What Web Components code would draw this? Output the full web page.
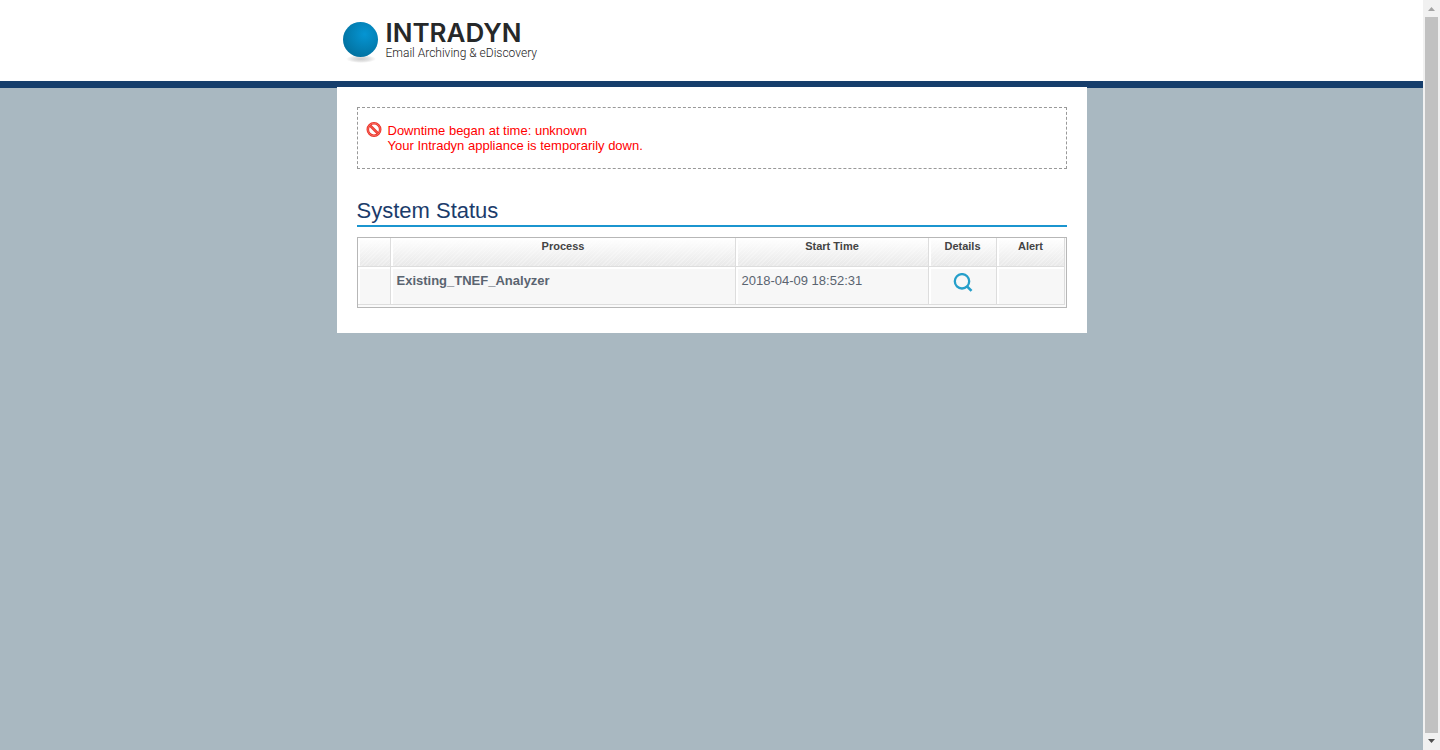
<!DOCTYPE html>
<html lang="en">
<head>
<meta charset="utf-8">
<title>Intradyn - System Status</title>
<style>
html, body { margin: 0; height: 100%; }
body { font: 13px/15px "Liberation Sans", Arial, sans-serif; color: #5a6470; background: #a9b8c1; overflow: hidden; }
</style>
</head>
<body>
<app-shell>
  <site-header slot="header"><brand-logo></brand-logo></site-header>
  <content-card>
    <status-notice>
      <div>Downtime began at time: unknown</div>
      <div>Your Intradyn appliance is temporarily down.</div>
    </status-notice>
    <section-title>System Status</section-title>
    <process-table></process-table>
  </content-card>
  <scroll-rail slot="rail"></scroll-rail>
</app-shell>
<script>
function define(name, markup) {
  const template = document.createElement('template');
  template.innerHTML = markup;
  customElements.define(name, class extends HTMLElement {
    constructor() {
      super();
      this.attachShadow({ mode: 'open' }).append(template.content.cloneNode(true));
    }
  });
}

define('app-shell', `
<style>
:host { display: grid; grid-template-columns: minmax(0, 1fr) 17px; min-height: 100vh; }
</style>
<div><slot name="header"></slot><main><slot></slot></main></div>
<slot name="rail"></slot>`);

define('site-header', `
<style>
:host { display: block; background: #fff; border-bottom: 7px solid #163e6c; }
header { box-sizing: border-box; max-width: 750px; height: 81px; margin: 0 auto; padding: 20px 6px 0; }
</style>
<header><slot></slot></header>`);

define('brand-logo', `
<style>
:host { display: block; }
a { display: inline-flex; gap: 7px; color: #262829; text-decoration: none; }
svg { display: block; flex: none; }
.name { display: block; font: 600 26px/26px Inter, sans-serif; }
.tag { display: block; font: 300 12px/14px Roboto, sans-serif; color: #222; white-space: nowrap; }
</style>
<a href="#">
  <svg width="36" height="44" viewBox="0 0 36 44" aria-hidden="true">
    <defs>
      <radialGradient id="ball" cx=".62" cy=".35" r=".7"><stop offset="0" stop-color="#0595d3"/><stop offset="1" stop-color="#02719f"/></radialGradient>
      <radialGradient id="shade"><stop offset="0" stop-color="#ccc"/><stop offset=".6" stop-color="#e4e4e4"/><stop offset="1" stop-color="#fff"/></radialGradient>
    </defs>
    <ellipse cx="18" cy="39" rx="15" ry="4" fill="url(#shade)"/>
    <circle cx="17.500" cy="19.500" r="17.500" fill="url(#ball)"/>
  </svg>
  <span><span class="name">INTRADYN</span><span class="tag">Email Archiving &amp; eDiscovery</span></span>
</a>`);

define('content-card', `
<style>
:host { display: block; box-sizing: border-box; position: relative; max-width: 750px; margin: -1px auto 0; padding: 20px 20px 25px; background: #fff; }
</style>
<slot></slot>`);

define('status-notice', `
<style>
:host { display: flex; gap: 5px; border: 1px dashed #999; padding: 13px 8px 15px; color: #f00; }
svg { flex: none; }
.text { padding-top: 2px; }
</style>
<svg width="17" height="17" viewBox="0 0 17 17" aria-hidden="true">
  <g fill="none" stroke="#ea3228" stroke-width="2.600"><circle cx="8" cy="8.500" r="6.200"/><path d="M4 4.500l8 8"/></g>
  <g fill="none" stroke="#ff8b80" stroke-width=".6"><circle cx="8" cy="8.500" r="6.200"/><path d="M4 4.500l8 8"/></g>
</svg>
<div class="text" role="alert"><slot></slot></div>`);

define('section-title', `
<style>
:host { display: block; margin: 30px 0 10px; }
h1 { margin: 0; padding-bottom: 2px; font-size: 22px; line-height: 24px; font-weight: 400; color: #1b3c6b; border-bottom: 2px solid #1b95cf; }
</style>
<h1><slot></slot></h1>`);

define('search-icon', `
<style>:host { display: inline-block; vertical-align: top; } svg { display: block; }</style>
<svg width="20" height="20" viewBox="0 0 20 20" aria-hidden="true">
  <g fill="none" stroke="#259fca"><circle cx="9" cy="8.300" r="7.200" stroke-width="2.300"/><path d="M13.500 12.800l5 5" stroke-width="2.600"/></g>
</svg>`);

define('process-table', `
<style>
:host { display: block; border: 1px solid #b7b7b7; padding: 0 1px 2px 0; background: #fafafa; }
table { width: 100%; table-layout: fixed; border-collapse: separate; border-spacing: 0; }
th, td { box-sizing: border-box; vertical-align: top; border: solid #ddd; border-width: 0 1px 1px 0; padding: 6px 5px 0 6px; box-shadow: inset 2px 2px #fff; }
thead th { height: 29px; padding-top: 2px; font-size: 11px; line-height: 13px; color: #444;
  background: repeating-linear-gradient(135deg, #ffffff44 0 1px, #ffffff00 1px 3px), linear-gradient(#fff, #e9e9e9); }
tbody th, tbody td { height: 38px; background: #f7f7f7; text-align: left; }
tbody .center { text-align: center; }
.mark { width: 33px; } .time { width: 193px; } .small { width: 68px; }
button { display: inline-block; padding: 0; border: 0; background: none; vertical-align: top; cursor: pointer; }
</style>
<table>
  <colgroup><col class="mark"><col><col class="time"><col class="small"><col class="small"></colgroup>
  <thead><tr><th></th><th scope="col">Process</th><th scope="col">Start Time</th><th scope="col">Details</th><th scope="col">Alert</th></tr></thead>
  <tbody><tr><td></td><th scope="row">Existing_TNEF_Analyzer</th><td>2018-04-09 18:52:31</td><td class="center"><button type="button" aria-label="Details"><search-icon></search-icon></button></td><td></td></tr></tbody>
</table>`);

define('scroll-rail', `
<style>
:host { display: flex; flex-direction: column; align-items: center; background: #f1f1f1; }
.thumb { flex: 1; width: 13px; background: #c1c1c1; }
svg { display: block; flex: none; }
</style>
<svg width="17" height="17" viewBox="0 0 17 17" aria-hidden="true"><path d="M5 11h7L8.500 7z" fill="#a3a3a3"/></svg>
<div class="thumb"></div>
<svg width="17" height="17" viewBox="0 0 17 17" aria-hidden="true"><path d="M5 6h7L8.500 10z" fill="#505050"/></svg>`);
</script>
</body>
</html>
